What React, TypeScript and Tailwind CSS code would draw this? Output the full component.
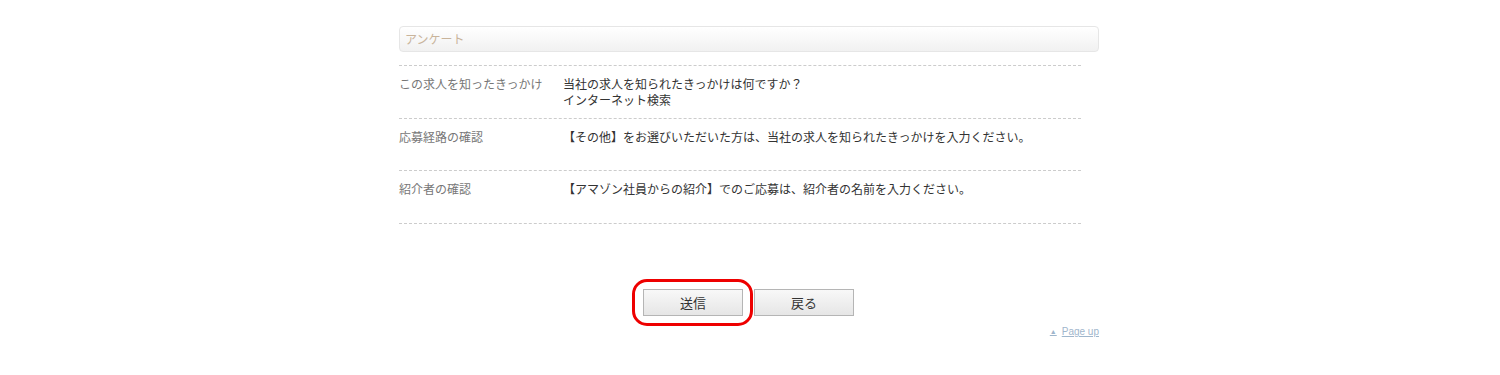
import React from "react";

// ─── Data ─────────────────────────────────────────────────────────────────────

interface Row {
  label: string;
  lines: string[];
  h: string;
}

const ROWS: Row[] = [
  { label: "この求人を知ったきっかけ", lines: ["当社の求人を知られたきっかけは何ですか？", "インターネット検索"], h: "min-h-[53px]" },
  { label: "応募経路の確認", lines: ["【その他】をお選びいただいた方は、当社の求人を知られたきっかけを入力ください。"], h: "min-h-[52px]" },
  { label: "紹介者の確認", lines: ["【アマゾン社員からの紹介】でのご応募は、紹介者の名前を入力ください。"], h: "min-h-[53px]" },
];

const FONT = "font-['Noto_Sans_CJK_JP','Noto_Sans',sans-serif]";

// ─── Main Component ───────────────────────────────────────────────────────────

export default function App() {
  return (
    <div className={`w-[1500px] h-[375px] bg-white ${FONT} text-[12px] leading-[16px]`}>
      <div className="w-[702px] mx-auto pt-[26px]">
        {/* Section header */}
        <div className="w-[700px] h-[26px] rounded-[4px] border border-[#e6e6e6] bg-gradient-to-b from-white to-[#f1f1f1] px-[5px] flex items-center">
          <span className="text-[#c9b49b]">アンケート</span>
        </div>

        {/* Rows */}
        <div className="mt-[13px] w-[682px] border-b border-dashed border-[#cccccc]">
          {ROWS.map((row) => (
            <div key={row.label} className={`flex border-t border-dashed border-[#cccccc] ${row.h} pt-[10px] pb-[9px]`}>
              <div className="w-[164px] shrink-0 text-[#777777]">{row.label}</div>
              <div className="text-[#333333]">
                {row.lines.map((l) => (
                  <div key={l}>{l}</div>
                ))}
              </div>
            </div>
          ))}
        </div>

        {/* Buttons */}
        <div className="mt-[65px] flex justify-center gap-[11px] pr-[3px]">
          <div className="relative">
            <button className="w-[100px] h-[27px] border border-[#b5b5b5] bg-gradient-to-b from-[#f8f8f8] to-[#e6e6e6] text-[13px] text-[#333]">
              送信
            </button>
            <div className="absolute left-[-11px] top-[-10px] w-[121px] h-[47px] border-[3px] border-[#ee0000] rounded-[15px] pointer-events-none" />
          </div>
          <button className="w-[100px] h-[27px] border border-[#b5b5b5] bg-gradient-to-b from-[#f8f8f8] to-[#e6e6e6] text-[13px] text-[#333]">
            戻る
          </button>
        </div>

        {/* Page up */}
        <div className="w-[700px] flex justify-end mt-[10px]">
          <a className="text-[10px] leading-[12px] text-[#9fb6cc] underline flex items-center gap-[5px] font-['Liberation_Sans',sans-serif]">
            <span className="text-[7px]">▲</span>
            Page up
          </a>
        </div>
      </div>
    </div>
  );
}
